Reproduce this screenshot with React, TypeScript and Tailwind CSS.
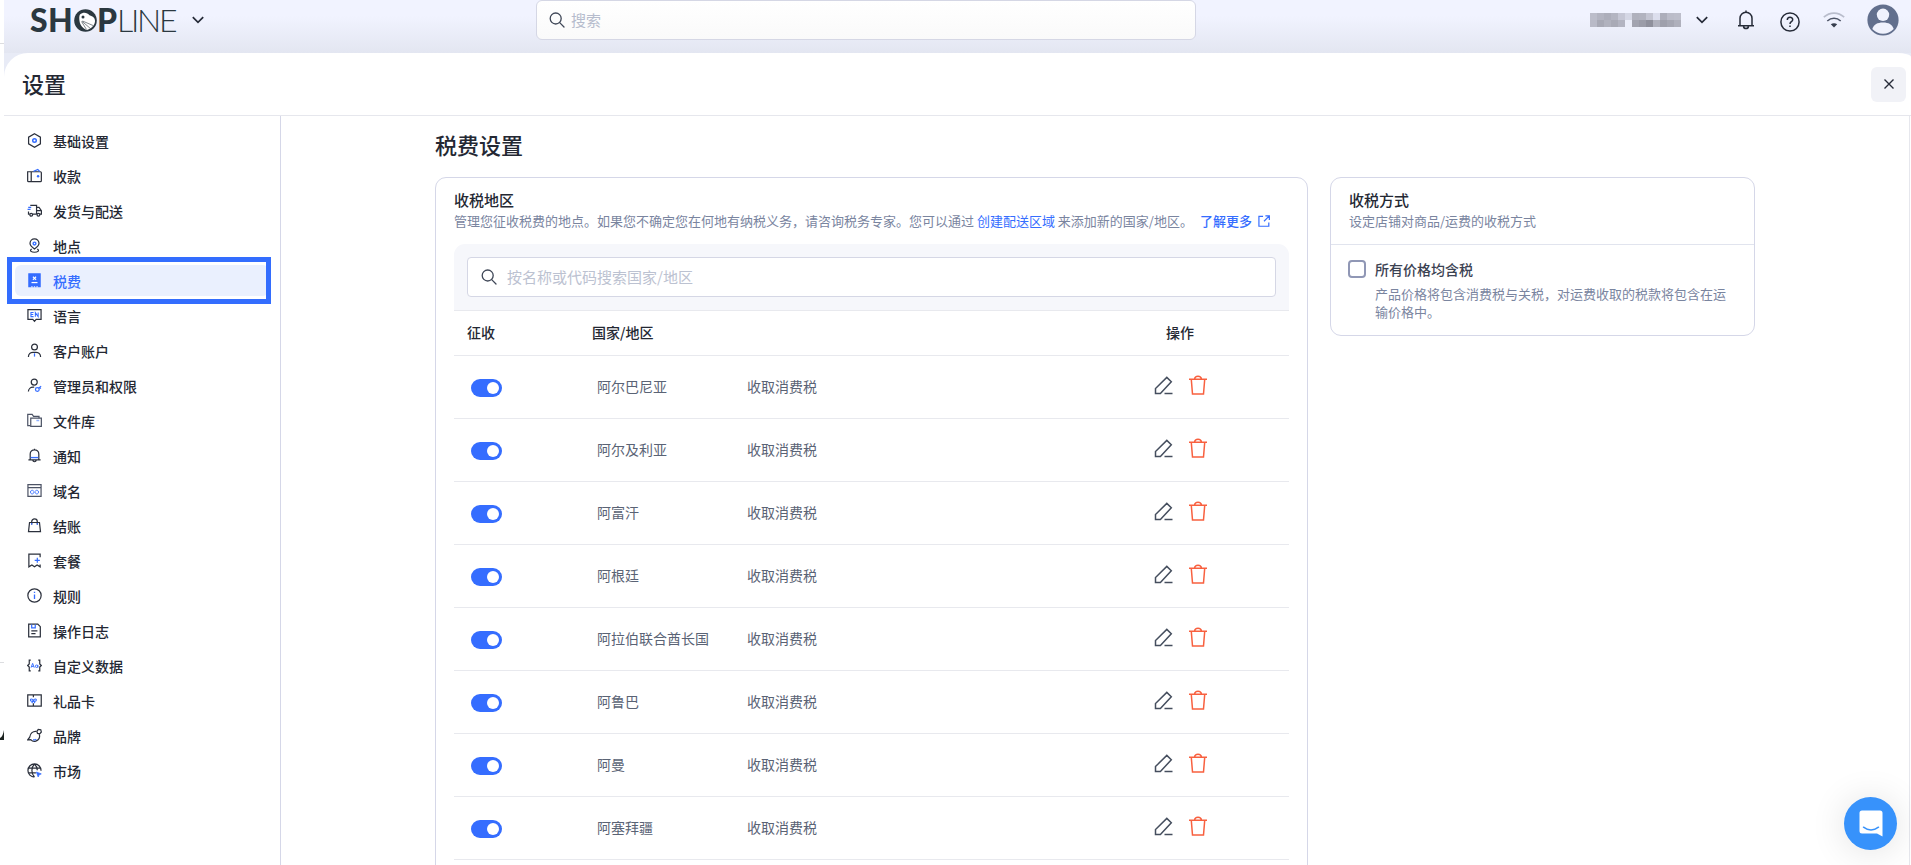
import { useState } from 'react'
import type { ReactNode } from 'react'

const BLUE = '#356dff'

interface NavItem {
  label: string
  icon: ReactNode
}

interface Region {
  code: string
  name: string
}

const NAV_ITEMS: NavItem[] = [
  {
    label: '基础设置',
    icon: (
      <>
        <path d="M8 .8 14.3 4.4v7.2L8 15.2 1.7 11.6V4.4Z" />
        <circle cx="8" cy="8" r="1.9" stroke={BLUE} strokeWidth="1.6" />
      </>
    )
  },
  {
    label: '收款',
    icon: (
      <>
        <path d="M.7 4h13.6c.6 0 1 .4 1 1v8.500c0 .6-.4 1-1 1H1.700c-.6 0-1-.4-1-1ZM4.500 4v10.500" />
        <path d="M7 3.600 11.500 1.500l2 2.200" stroke={BLUE} />
        <circle cx="11.800" cy="8.700" r="1.300" fill={BLUE} stroke="none" />
      </>
    )
  },
  {
    label: '发货与配送',
    icon: (
      <>
        <path d="M3.500 2.500h6.700v9.300M10.200 4.600h2.600l2.600 3.600v3.600h-1.600M1.600 9v2.800h1.200M6.200 11.800h4.300M10.200 8.200h5" />
        <circle cx="4.500" cy="12.500" r="1.500" />
        <circle cx="12.200" cy="12.500" r="1.500" />
        <path d="M1.300 4.700h3.200M.6 6.900h3.200" stroke={BLUE} />
      </>
    )
  },
  {
    label: '地点',
    icon: (
      <>
        <path d="M8 11.800C5 9.700 3.200 8 3.200 5.700a4.800 4.800 0 0 1 9.600 0C12.800 8 11 9.700 8 11.800Z" />
        <path d="M5 11.800c-3 2 0 3.400 3 3.400s6-1.400 3-3.400" />
        <circle cx="8" cy="5.900" r="1.500" stroke={BLUE} strokeWidth="1.500" />
      </>
    )
  },
  {
    label: '税费',
    icon: (
      <>
        <path d="M2 1h12v13.500H2Z" fill={BLUE} stroke={BLUE} />
        <path d="m6.300 4 3.400 3.200M9.700 4 6.300 7.200" stroke="#fff" strokeWidth="1.100" />
        <path d="M4.800 10.200h6.400" stroke="#fff" />
        <path d="M4.500 14.800h1.500M7.300 14.800h1.400M10 14.800h1.500" stroke="#eaf0fe" />
      </>
    )
  },
  {
    label: '语言',
    icon: (
      <>
        <path d="M1 1.800h14v10.400H9.800L8 14.200l-1.800-2H1Z" />
        <path d="M7 4.900H4.200v4.300H7M4.200 7h2.500M8.900 9.400V4.900l3 4.300V4.700" stroke={BLUE} strokeWidth="1.100" />
      </>
    )
  },
  {
    label: '客户账户',
    icon: (
      <>
        <circle cx="8" cy="4.300" r="3.100" />
        <path d="M1.500 14.800c0-3 2.300-4.900 5-4.900h3c2.700 0 5 1.900 5 4.900" />
        <path d="M8 11v3.500" stroke={BLUE} />
      </>
    )
  },
  {
    label: '管理员和权限',
    icon: (
      <>
        <circle cx="7.700" cy="4.300" r="3.200" />
        <path d="M1.500 14.500c0-3 2.300-4.700 5-4.700h1.200" />
        <circle cx="11" cy="12.300" r="2" stroke={BLUE} />
        <path d="m12.400 11 2.700-2.300M13.700 10.200l1 1.200" stroke={BLUE} />
      </>
    )
  },
  {
    label: '文件库',
    icon: (
      <g stroke="#4d5466">
        <path d="M3.500 13.500H.8v-12h4.700l1.500 2h5.800v2" />
        <path d="M4 5.500h11.300v8.700H4Z" />
        <path d="M10 8h3" stroke="#8fb0ff" strokeWidth="1.600" />
      </g>
    )
  },
  {
    label: '通知',
    icon: (
      <>
        <path d="M8 .8V2M3.400 12.300V6.500a4.600 4.600 0 0 1 9.200 0v5.800M1.500 12.600h13M6.200 13.300c.3 1.800 3.300 1.800 3.600 0" />
        <path d="M4 10.200h8" stroke={BLUE} strokeWidth="1.400" />
      </>
    )
  },
  {
    label: '域名',
    icon: (
      <>
        <path d="M1 1.800h14v12.500H1ZM1 4.900h14" stroke="#4d5466" />
        <path d="M7 8.300c-1.200-1-3.300-.6-3.300 1.400S5.800 12.100 7 11.100M9 8.300c1.200-1 3.300-.6 3.300 1.400S10.200 12.100 9 11.100M6.300 9.700h3.400" stroke={BLUE} strokeWidth="1" />
      </>
    )
  },
  {
    label: '结账',
    icon: (
      <>
        <path d="M2.700 4.800h10.600l1.100 9.800H1.600Z" />
        <path d="M5 7V4a3 3 0 0 1 6 0v3" />
        <path d="M5 5.300v2M11 5.300v2" stroke={BLUE} />
      </>
    )
  },
  {
    label: '套餐',
    icon: (
      <>
        <path d="M14 4.500V1.200H2v13.500l3.200-2 2.800 2 2.800-2 3.200 2v-2.500" />
        <path d="M11 5v5.500M8.200 7.800h5.500" stroke={BLUE} />
      </>
    )
  },
  {
    label: '规则',
    icon: (
      <>
        <circle cx="8" cy="8" r="7.100" />
        <path d="M8 6.800v5M8 4v1.400" stroke={BLUE} strokeWidth="1.400" />
      </>
    )
  },
  {
    label: '操作日志',
    icon: (
      <>
        <path d="M1.800 1.200h9.700l2.700 2.700v10.900H1.800Z" />
        <path d="M4.600 8.500h6.500M4.600 11.300h4.500" />
        <path d="M5 1.500v3.700h3.800V1.500" stroke={BLUE} />
      </>
    )
  },
  {
    label: '自定义数据',
    icon: (
      <>
        <path d="M4 2.300H2.400v4L.7 8l1.700 1.700v4H4M12 2.300h1.600v4L15.300 8l-1.700 1.700v4H12" />
        <path d="m4.300 10.300 1.700-4.600 1.700 4.600M4.900 9h2.200M11.600 7.300v3" stroke={BLUE} strokeWidth="1" />
        <circle cx="10.200" cy="8.800" r="1.300" stroke={BLUE} strokeWidth="1" />
      </>
    )
  },
  {
    label: '礼品卡',
    icon: (
      <>
        <path d="M.8 2h14.400v12H.8ZM6.800 2v2.500M6.800 11v3" />
        <path d="M6.800 8c-1-2.500-3.800-2-3 0 .5 1.300 2 .8 3 0 1-2.500 3.800-2 3 0-.5 1.300-2 .8-3 0Zm0 0-1.700 2.800M6.800 8l1.700 2.800" stroke={BLUE} strokeWidth="1.100" />
      </>
    )
  },
  {
    label: '品牌',
    icon: (
      <>
        <path d="M10 3.600C6.500 3 3.300 5.800 2.900 9.800L.8 12.600l3.200-.3c2.700 3.300 8.600 2 9.400-2.700.1-1 0-2-.4-2.900" />
        <path d="m10.500 3.500 1.500-2 2.700.3.600 2.500-1.700 1.900-2.400-.4Z" />
        <path d="M6.500 12.400c1.200.5 2.500.3 3.400-.6" stroke={BLUE} />
      </>
    )
  },
  {
    label: '市场',
    icon: (
      <>
        <path d="M15 8.200A7 7 0 1 0 8 15M1.200 5.500h13.600M1.200 10.500h8.300M8 1C4.300 4.500 4.300 11.500 8 15M8 1c1.800 1.700 2.900 4.200 3 6.800" />
        <path d="m10 9.600 5.200 2-2.300 1-1 2.300Z" fill={BLUE} stroke={BLUE} strokeWidth=".8" />
      </>
    )
  }
]

const REGIONS: Region[] = [
  { code: 'AL', name: '阿尔巴尼亚' },
  { code: 'DZ', name: '阿尔及利亚' },
  { code: 'AF', name: '阿富汗' },
  { code: 'AR', name: '阿根廷' },
  { code: 'AE', name: '阿拉伯联合酋长国' },
  { code: 'AW', name: '阿鲁巴' },
  { code: 'OM', name: '阿曼' },
  { code: 'AZ', name: '阿塞拜疆' }
]

// store name is masked with a mosaic, one entry per 7px tile
const MASK_TILES = [
  ['#bcbdca', '#b3b4c1', '#adaebb', '#b4b5c2', '#c6c7d5', '#d5d7e5', '#b0b1bd', '#b2b3bf', '#c4c5d2', '#dcdeed', '#adaebb', '#bbbcc9', '#bdbecb'],
  ['#b9bac7', '#a8a9b5', '#b1b2be', '#a9aab6', '#b3b4c1', '#eceefa', '#a3a4b0', '#9b9ca8', '#8f909c', '#b0b1bd', '#9fa0ac', '#a6a7b3', '#afb0bc']
]

function SearchIcon({ className }: { className?: string }) {
  return (
    <svg viewBox="0 0 16 16" className={className} fill="none" stroke="#3f4757" strokeWidth="1.300" strokeLinecap="round">
      <circle cx="6.700" cy="6.500" r="5.500" />
      <path d="m10.700 10.600 4.300 4.400" />
    </svg>
  )
}

function ChevronIcon() {
  return (
    <svg viewBox="0 0 12 8" className="w-3 h-2" fill="none" stroke="#262b38" strokeWidth="1.700">
      <path d="m.8 1.200 5.200 5.200 5.200-5.200" />
    </svg>
  )
}

function Logo() {
  return (
    <svg viewBox="0 -7 148 40" className="w-[148px] h-10" fill="#2b3840" role="img" aria-label="SHOPLINE">
      <g fontSize="32" fontFamily="Lato, sans-serif">
        <text x="0" y="25" fontWeight="900">S</text>
        <text x="18" y="25" fontWeight="900">H</text>
        <text x="67" y="25" fontWeight="900">P</text>
        <text x="87" y="25" fontWeight="300">L</text>
        <text x="101" y="25" fontWeight="300">I</text>
        <text x="107" y="25" fontWeight="300">N</text>
        <text x="129" y="25" fontWeight="300">E</text>
      </g>
      <circle cx="55.500" cy="13.500" r="11.300" />
      <path d="M50 7.500c3-2.800 7.500-2 9.500.7 3.500 1 5.800 3 5.500 6.300-.5 4.500-4.800 8-8.500 8.500-3.500-1.500-6.500-5-7-9-.3-2.500-.5-5 .5-6.500Z" fill="#fff" />
      <circle cx="53" cy="10" r="1.500" />
      <path d="m51.500 14.500 5 8M52 14.300l8.500 7.300M52.500 14l10.500 4.500" stroke="#2b3840" strokeWidth=".6" fill="none" />
    </svg>
  )
}

function TopBar() {
  return (
    <header className="h-[53px] px-[26px] flex items-start bg-linear-to-b from-[#f1f3ff] from-30% to-[#e3e6f1]">
      <div className="w-[506px] shrink-0 h-10 flex items-center">
        <button className="flex items-center gap-3.5" aria-label="SHOPLINE">
          <Logo />
          <ChevronIcon />
        </button>
      </div>
      <label className="w-[660px] h-10 px-3 flex items-center gap-1.5 rounded-md border border-[#d5d7e5] bg-linear-to-b from-white to-[#fafafa]">
        <SearchIcon className="w-4 h-4" />
        <input
          type="search"
          aria-label="搜索"
          placeholder="搜索"
          className="flex-1 bg-transparent outline-none text-[15px] placeholder:text-[#b6bccd]"
        />
      </label>
      <div className="flex-1 h-10 flex items-center justify-end">
        <button className="flex items-center gap-[15px]" aria-label="店铺">
          <svg viewBox="0 0 91 14" className="w-[91px] h-3.5" shapeRendering="crispEdges">
            {MASK_TILES.map((row, y) =>
              row.map((fill, x) => <rect key={`${x}-${y}`} x={x * 7} y={y * 7} width="7" height="7" fill={fill} />)
            )}
          </svg>
          <ChevronIcon />
        </button>
        <button className="ml-[29px]" aria-label="通知">
          <svg viewBox="0 0 18 20" className="w-[18px] h-5" fill="none" stroke="#262b38" strokeWidth="1.500">
            <path d="M9 .5v1.800M3 15.500V8.300a6 6 0 0 1 12 0v7.200M1 15.800h16M6.500 16.500c.5 2.800 4.500 2.800 5 0" />
          </svg>
        </button>
        <button className="ml-[25px] pt-1" aria-label="帮助">
          <svg viewBox="0 0 20 20" className="w-5 h-5" fill="none" stroke="#262b38" strokeWidth="1.500">
            <circle cx="10" cy="10" r="9.100" />
            <path d="M7.300 8c0-3.500 5.400-3.500 5.400-.3 0 2-2.700 2-2.700 4.200M10 13.500v1.600" />
          </svg>
        </button>
        <svg viewBox="0 0 22 16" className="ml-[23px] w-[22px] h-4" fill="none" strokeWidth="1.600">
          <path d="M.8 5.200c6-5.400 14.400-5.400 20.400 0" stroke="#b9bdcc" />
          <path d="M4.300 9c4-3.600 9.400-3.600 13.400 0" stroke="#4d5466" />
          <path d="M7.800 12.300c2-1.300 4.400-1.300 6.400 0L11 15.600Z" fill="#363d4d" />
        </svg>
        <button className="ml-[22px] -mr-3.5" aria-label="账户">
          <svg viewBox="0 0 32 32" className="w-8 h-8">
            <circle cx="16" cy="16" r="15.600" fill="#626f8d" />
            <circle cx="16" cy="10.800" r="6.200" fill="#f0f2fd" />
            <path d="M5.300 25c1.500-4.500 5-6.500 10.700-6.500S25.200 20.500 26.700 25c-3 3.200-6.600 4.700-10.700 4.700S8.300 28.200 5.300 25Z" fill="#f0f2fd" />
          </svg>
        </button>
      </div>
    </header>
  )
}

function Sidebar() {
  return (
    <nav className="w-[277px] shrink-0 border-r border-[#d5d7e8] px-[11px] pt-[9px]">
      <ul className="flex flex-col gap-1">
        {NAV_ITEMS.map(item => {
          const active = item.label === '税费'
          return (
            <li key={item.label} className="relative">
              <a
                href="#"
                aria-current={active ? 'page' : undefined}
                className={`h-[31px] pl-3 flex items-center gap-[11px] rounded-md text-sm font-medium ${
                  active ? 'bg-[#eaf0fe] text-[#356dff]' : 'text-[#242833]'
                }`}
              >
                <svg viewBox="0 0 16 16" className="w-[15px] h-[15px]" fill="none" stroke="#2b303c" strokeWidth="1.300">
                  {item.icon}
                </svg>
                {item.label}
              </a>
              {/* callout frame */}
              {active && (
                <div className="absolute -left-2 -right-0.5 -inset-y-2 border-5 border-[#336dfe] pointer-events-none" />
              )}
            </li>
          )
        })}
      </ul>
    </nav>
  )
}

function RegionRow({ region }: { region: Region }) {
  const [enabled, setEnabled] = useState(true)

  return (
    <tr className="h-[63px] border-b border-[#e8e9ee]">
      <td className="pl-[17px]">
        <input
          type="checkbox"
          role="switch"
          aria-label={region.name}
          checked={enabled}
          onChange={e => setEnabled(e.target.checked)}
          className="appearance-none block mt-0.5 w-[31px] h-[18px] p-[3px] rounded-full bg-[#c3c8d6] checked:bg-[#356dff] before:block before:w-3 before:h-3 before:rounded-full before:bg-white checked:before:ml-[13px]"
        />
      </td>
      <td className="pl-[18px] pb-0.5">{region.name}</td>
      <td className="pl-[18px] pb-0.5">收取消费税</td>
      <td className="pb-0.5">
        <div className="flex justify-center gap-4 pb-0.5">
          <button aria-label="编辑">
            <svg viewBox="0 0 19 19" className="w-[19px] h-[19px]" fill="none" stroke="#454e5e" strokeWidth="1.500">
              <path d="M1.500 17.500v-5L12.800 1.400l4.500 4.400L6.400 17.500Z" />
              <path d="M10.500 17.500h8" />
            </svg>
          </button>
          <button aria-label="删除">
            <svg viewBox="0 0 18 20" className="w-[18px] h-5" fill="none" stroke="#f8603f" strokeWidth="1.500">
              <path d="M0 4.200h18M2.300 4.500l1.200 14.500h11L15.700 4.500M5.500 4c.5-3.800 6.500-3.800 7 0" />
            </svg>
          </button>
        </div>
      </td>
    </tr>
  )
}

function RegionCard() {
  return (
    <section className="flex-1 px-[18px] pt-[11px] pb-16 rounded-[11px] border border-[#d5d7e8]">
      <h3 className="text-[15px] leading-[22px] font-medium text-[#242833]">收税地区</h3>
      <p className="text-[13px] leading-5 text-[#7a859f]">
        管理您征收税费的地点。如果您不确定您在何地有纳税义务，请咨询税务专家。您可以通过{' '}
        <a href="#" className="text-[#356dff]">创建配送区域</a> 来添加新的国家/地区。{' '}
        <a href="#" className="ml-1 inline-flex items-center gap-1.5 font-medium text-[#356dff]">
          了解更多
          <svg viewBox="0 0 13 13" className="w-3 h-3" fill="none" stroke="#356dff" strokeWidth="1.300">
            <path d="M5.500 1.500H1v10.700h10.700V8M8 1h4.300v4.300M12 1.200 6.500 6.800" />
          </svg>
        </a>
      </p>
      <div className="mt-[13px] p-[13px] rounded-t-[11px] bg-[#f6f7fb]">
        <label className="h-10 px-[13px] flex items-center gap-2.5 rounded border border-[#d5d7e5] bg-white">
          <SearchIcon className="w-4 h-4" />
          <input
            type="search"
            aria-label="按名称或代码搜索国家/地区"
            placeholder="按名称或代码搜索国家/地区"
            className="flex-1 bg-transparent outline-none text-[15px] placeholder:text-[#bcc2d1]"
          />
        </label>
      </div>
      <table className="w-full table-fixed text-sm text-left text-[#5a6375]">
        <thead>
          <tr className="h-[45px] border-y border-[#e8e9ee] text-[#242833]">
            <th className="w-[125px] pl-[13px] pb-0.5 font-medium">征收</th>
            <th className="w-[150px] pl-[13px] pb-0.5 font-medium">国家/地区</th>
            <th />
            <th className="w-[218px] pb-0.5 font-medium text-center">操作</th>
          </tr>
        </thead>
        <tbody>
          {REGIONS.map(region => (
            <RegionRow key={region.code} region={region} />
          ))}
        </tbody>
      </table>
    </section>
  )
}

function MethodCard() {
  const [included, setIncluded] = useState(false)

  return (
    <section className="w-[425px] shrink-0 self-start rounded-[11px] border border-[#d5d7e8]">
      <div className="px-[18px] pt-[11px] pb-[13px] border-b border-[#e1e4ee]">
        <h3 className="text-[15px] leading-[22px] font-medium text-[#242833]">收税方式</h3>
        <p className="text-[13px] leading-5 text-[#7a859f]">设定店铺对商品/运费的收税方式</p>
      </div>
      <div className="px-[17px] pt-[15px] pb-3.5 flex gap-[9px]">
        <input
          id="tax-included"
          type="checkbox"
          checked={included}
          onChange={e => setIncluded(e.target.checked)}
          className="appearance-none shrink-0 w-[18px] h-[18px] rounded border-2 border-[#9097b5] checked:bg-[#356dff] checked:border-[#356dff]"
        />
        <div>
          <label htmlFor="tax-included" className="block text-sm leading-[18px] font-medium text-[#3b4252]">
            所有价格均含税
          </label>
          <p className="mt-[7px] text-[13px] leading-[18px] text-[#7a859f]">
            产品价格将包含消费税与关税，对运费收取的税款将包含在运输价格中。
          </p>
        </div>
      </div>
    </section>
  )
}

export default function App() {
  return (
    <div className="h-screen flex overflow-hidden bg-white font-['Noto_Sans_CJK_SC',sans-serif]">
      <div className="w-1 shrink-0 flex flex-col">
        <div className="h-11 border-b border-[#dcdde0]" />
        <div className="h-[619px] border-b border-[#dcdde0]" />
        <svg viewBox="0 0 4 10" className="mt-[67px] w-1 h-2.5">
          <path d="M4 0v10H0V8C2 7 3.300 4 4 0Z" fill="#1c2320" />
        </svg>
      </div>
      <div className="flex-1 min-w-0 flex flex-col bg-[#e8ebf6]">
        <TopBar />
        <div className="flex-1 min-h-0 flex flex-col rounded-tl-3xl rounded-tr-[14px_4px] bg-white">
          <div className="h-[63px] shrink-0 pl-[18px] pr-[5px] flex items-center justify-between border-b border-[#e6e7ed]">
            <h1 className="pb-0.5 text-[22px] font-medium text-[#242833]">设置</h1>
            <button className="w-[35px] h-[35px] flex items-center justify-center rounded-md bg-[#f1f2f7]" aria-label="关闭">
              <svg viewBox="0 0 10 10" className="w-2.5 h-2.5" fill="none" stroke="#262b38" strokeWidth="1.400">
                <path d="m.5.5 9 9M9.500.5l-9 9" />
              </svg>
            </button>
          </div>
          <div className="flex-1 min-h-0 flex">
            <Sidebar />
            <main className="flex-1 min-w-0 mr-px border-r border-[#e6e7ed] overflow-hidden">
              <div className="max-w-[1320px] mx-auto pt-3">
                <h2 className="text-[22px] leading-8 font-medium text-[#242833]">税费设置</h2>
                <div className="mt-[17px] flex gap-[22px]">
                  <RegionCard />
                  <MethodCard />
                </div>
              </div>
            </main>
          </div>
        </div>
      </div>
      <button
        className="fixed right-3.5 bottom-[15px] w-[53px] h-[53px] flex items-center justify-center rounded-full bg-[#3792fb] shadow-[0_2px_36px_rgba(0,0,0,0.12)]"
        aria-label="在线客服"
      >
        <svg viewBox="0 0 24 27" className="w-6 h-[27px]" fill="none">
          <path d="M3 .5h18a2.500 2.500 0 0 1 2.500 2.500v23.500L18 23.500H3A2.500 2.500 0 0 1 .5 21V3A2.500 2.500 0 0 1 3 .5Z" fill="#fff" />
          <path d="M4.500 17.200c4.500 3.600 10.500 3.600 15 0" stroke="#3792fb" strokeWidth="1.500" strokeLinecap="round" />
        </svg>
      </button>
    </div>
  )
}
